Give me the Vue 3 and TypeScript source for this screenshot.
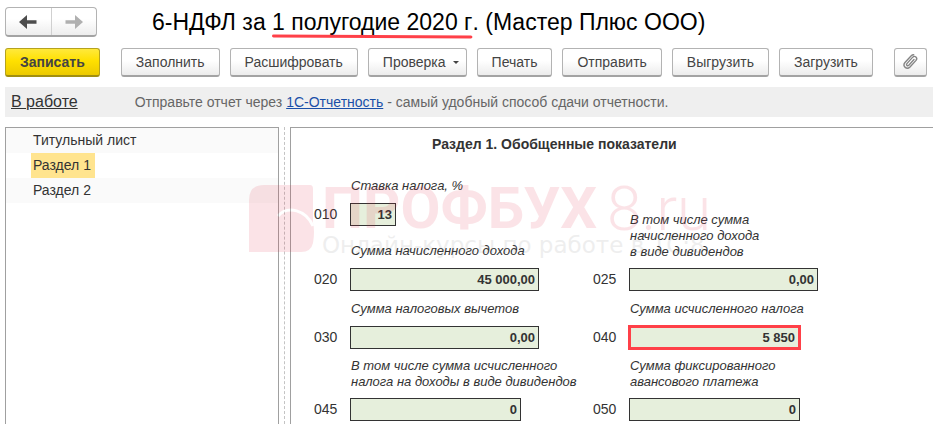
<script setup lang="ts">
import { ref } from 'vue'

interface Field {
  code: string
  caption: string[]
  value: string
  width: number
  marked?: boolean
}

const actions = ['Заполнить', 'Расшифровать', 'Проверка', 'Печать', 'Отправить', 'Выгрузить', 'Загрузить']
const sections = ['Титульный лист', 'Раздел 1', 'Раздел 2']
const current = ref('Раздел 1')

const columns = ref<Field[][]>([
  [
    { code: '010', caption: ['Ставка налога, %'], value: '13', width: 46 },
    { code: '020', caption: ['Сумма начисленного дохода'], value: '45 000,00', width: 189 },
    { code: '030', caption: ['Сумма налоговых вычетов'], value: '0,00', width: 189 },
    { code: '045', caption: ['В том числе сумма исчисленного', 'налога на доходы в виде дивидендов'], value: '0', width: 171 },
  ],
  [
    { code: '025', caption: ['В том числе сумма', 'начисленного дохода', 'в виде дивидендов'], value: '0,00', width: 189 },
    { code: '040', caption: ['Сумма исчисленного налога'], value: '5 850', width: 173, marked: true },
    { code: '050', caption: ['Сумма фиксированного', 'авансового платежа'], value: '0', width: 171 },
  ],
])
</script>

<template>
  <div class="page">
    <header class="top">
      <div class="nav">
        <button type="button" aria-label="Назад">
          <svg width="18" height="14" viewBox="0 0 18 14"><path d="M0 7 8 0v5.300h9.500v3.400H8V14z" fill="#4d4d4d" /></svg>
        </button>
        <button type="button" aria-label="Вперед">
          <svg width="18" height="14" viewBox="0 0 18 14"><path d="M18 7 10 0v5.300H.5v3.400H10V14z" fill="#b0b0b0" /></svg>
        </button>
      </div>
      <h1>
        6-НДФЛ за <span class="period">1 полугодие 2020 г<svg viewBox="0 0 196 5" preserveAspectRatio="none"><path d="M1.500 2 194.500 3" stroke="#ff4048" stroke-width="3" stroke-linecap="round" /></svg></span>. (Мастер Плюс ООО)
      </h1>
    </header>

    <div class="toolbar">
      <button type="button" class="btn primary">Записать</button>
      <div class="group">
        <button v-for="a in actions" :key="a" type="button" class="btn">
          {{ a }}<span v-if="a === 'Проверка'" class="caret"></span>
        </button>
      </div>
      <button type="button" class="btn clip" aria-label="Файлы">
        <svg width="18" height="18" viewBox="0 0 18 18" fill="none" stroke="#858585" stroke-width="1.400" stroke-linecap="round">
          <path d="M13 6.500 7.800 12.200c-1.400 1.400-3-.2-1.900-1.600l5.600-6.200c2.300-2.400 5.600.3 3.500 3l-6 6.500c-3.200 3.300-8-.6-5-4.400l6-6.500c.8-.8 1.700-1.200 2.700-1.200" />
        </svg>
      </button>
    </div>

    <div class="notice">
      <a href="#" class="status">В работе</a>
      <p>Отправьте отчет через <a href="#">1С-Отчетность</a> - самый удобный способ сдачи отчетности.</p>
    </div>

    <main class="work">
      <nav class="sections">
        <button v-for="s in sections" :key="s" type="button" @click="current = s">
          <span :class="{ current: s === current }">{{ s }}</span>
        </button>
      </nav>
      <div class="splitter"></div>
      <section class="report">
        <h2>Раздел 1. Обобщенные показатели</h2>
        <div class="columns">
          <div v-for="(col, i) in columns" :key="i" class="column">
            <div v-for="f in col" :key="f.code" class="field">
              <label :for="'f' + f.code" class="caption">
                <span v-for="line in f.caption" :key="line">{{ line }}</span>
              </label>
              <div class="entry">
                <label :for="'f' + f.code" class="code">{{ f.code }}</label>
                <input :id="'f' + f.code" v-model="f.value" type="text" :class="{ marked: f.marked }" :style="{ width: f.width + 'px' }" />
              </div>
            </div>
          </div>
        </div>
      </section>

      <div class="watermark" aria-hidden="true">
        <svg width="66" height="68" viewBox="0 0 66 68">
          <path d="M15 0H61Q64 0 64 4V38Q66 46 64 58Q62 67 52 67H0V15Q0 0 15 0Z" fill="#e0233f" />
          <path d="M29 31C39 20 57 25 64 41" fill="none" stroke="#fff" stroke-width="3" />
        </svg>
        <div class="brand">
          <div class="name"><b>ПРОФБУХ</b><span>8.ru</span></div>
          <div class="slogan">Онлайн-курсы по работе в 1С:8</div>
        </div>
      </div>
    </main>
  </div>
</template>

<style>
body {
  margin: 0;
  background: #fff;
}
</style>

<style scoped>
.page {
  display: flex;
  flex-direction: column;
  box-sizing: border-box;
  padding: 7px 0 0 5px;
  overflow: hidden;
  height: 100vh;
  font: 14px/16px "Liberation Sans", Arial, sans-serif;
  color: #333;
}
button,
input {
  font: inherit;
  color: inherit;
  box-sizing: border-box;
  margin: 0;
}
.top {
  display: flex;
  align-items: center;
  gap: 55px;
  flex: none;
}
.nav {
  display: flex;
  box-sizing: border-box;
  width: 92px;
  height: 30px;
  border: 1px solid #b3b3b3;
  border-bottom: 2px solid #a3a3a3;
  border-radius: 4px;
  background: linear-gradient(#fff 40%, #ededed);
}
.nav button {
  flex: 1;
  display: flex;
  align-items: center;
  justify-content: center;
  padding: 0;
  border: 0;
  background: none;
}
.nav button + button {
  border-left: 1px solid #d0d0d0;
}
h1 {
  margin: 0;
  font-size: 23px;
  line-height: 30px;
  font-weight: 400;
  color: #000;
  white-space: nowrap;
}
.period {
  position: relative;
}
.period svg {
  position: absolute;
  left: 0;
  bottom: -4px;
  width: 100%;
  height: 5px;
}
.toolbar {
  display: flex;
  gap: 21px;
  margin-top: 11px;
  flex: none;
}
.group {
  display: flex;
  gap: 10px;
}
.btn {
  height: 29px;
  padding: 0 14px;
  border: 1px solid #b3b3b3;
  border-bottom: 2px solid #a3a3a3;
  border-radius: 3px;
  background: linear-gradient(#fff 45%, #ececec);
  color: #444;
  white-space: nowrap;
}
.primary {
  font-weight: 700;
  border-color: #b5a21e;
  border-bottom-color: #a18f10;
  background: linear-gradient(#ffe93c, #ffe000 45%, #ecca00);
}
.caret {
  display: inline-block;
  margin: 0 -7px 3px 7px;
  border: 3px solid transparent;
  border-top-color: #444;
  border-bottom: 0;
}
.clip {
  width: 33px;
  padding: 0;
  display: flex;
  align-items: center;
  justify-content: center;
}
.notice {
  display: flex;
  align-items: center;
  flex: none;
  gap: 57px;
  height: 30px;
  margin-top: 10px;
  padding-left: 6px;
  background: #efefef;
  color: #666;
}
.notice p {
  margin: 0;
}
.notice a {
  color: #1a4fa8;
}
.notice .status {
  font-size: 16px;
  color: #333;
}
.work {
  position: relative;
  display: flex;
  flex: 1;
  min-height: 0;
  margin-top: 10px;
}
.sections {
  box-sizing: border-box;
  width: 274px;
  flex: none;
  border: 1px solid #a0a0a0;
  border-bottom: 0;
}
.sections button {
  display: block;
  width: 100%;
  padding: 0 0 0 25px;
  border: 0;
  background: #fff;
  text-align: left;
  line-height: 25px;
}
.sections button:nth-child(odd) {
  background: #fafafa;
}
.sections span {
  display: inline-block;
  padding: 0 4px 0 2px;
}
.sections .current {
  background: #ffe48f;
}
.splitter {
  width: 5px;
  flex: none;
  margin-right: 5px;
  border-right: 1px dashed #c4c4c4;
}
.report {
  flex: 1;
  border: 1px solid #a0a0a0;
  border-width: 1px 0 0 1px;
}
h2 {
  margin: 8px 0 0;
  padding-left: 141px;
  font-size: 14px;
  line-height: 16px;
}
.columns {
  display: flex;
  padding: 25px 0 0 23px;
}
.column {
  width: 279px;
}
.column + .column {
  padding-top: 35px;
}
.field {
  margin-bottom: 9px;
}
.column:first-child .field:first-child {
  margin-bottom: 16px;
}
.caption {
  display: flex;
  flex-direction: column;
  justify-content: center;
  min-height: 18px;
  margin: 0 0 8px 37px;
  font-size: 13px;
  font-style: italic;
  white-space: nowrap;
}
.entry {
  display: flex;
  align-items: center;
  height: 23px;
}
.code {
  width: 36px;
  padding-bottom: 2px;
}
.entry input {
  height: 23px;
  padding: 0 3px;
  border: 1px solid #333;
  border-radius: 0;
  background: #e6efdc;
  font-size: 13px;
  font-weight: 700;
  text-align: right;
}
.entry .marked {
  height: 25px;
  margin-left: -1px;
  border: 3px solid #ff4048;
}
.watermark {
  position: absolute;
  left: 244px;
  top: 58px;
  display: flex;
  gap: 7px;
  opacity: 0.12;
  pointer-events: none;
  white-space: nowrap;
}
.name {
  display: flex;
  gap: 10px;
  font: 300 62px/47px Roboto, sans-serif;
  color: #e0233f;
}
.name b {
  font-size: 58px;
  font-weight: 700;
}
.slogan {
  font: 23px/26px "DejaVu Sans", sans-serif;
  color: #777;
}
</style>
